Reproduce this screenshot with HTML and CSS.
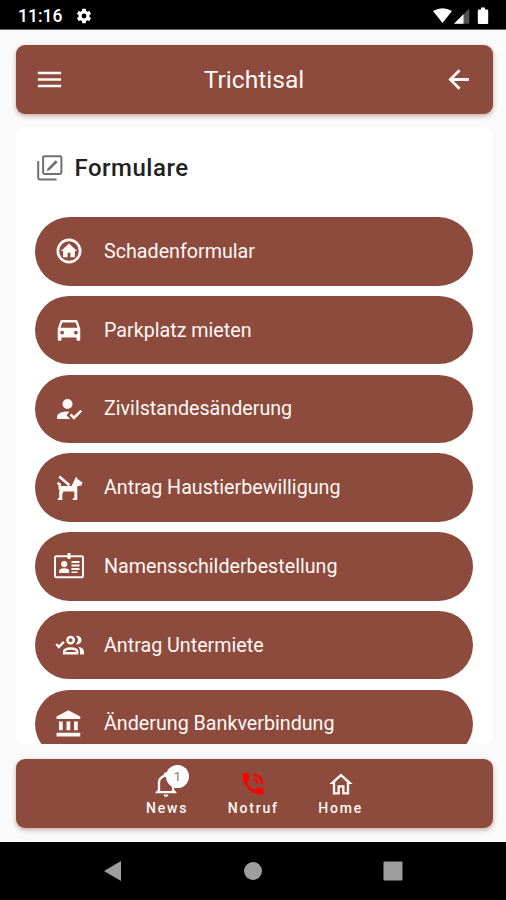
FILE: index.html
```html
<!DOCTYPE html>
<html lang="de">
	<head>
		<meta charset="UTF-8" />
		<meta name="viewport" content="width=device-width, initial-scale=1.0" />
		<title>Trichtisal</title>
		<link rel="stylesheet" href="styles.css">
	</head>

	<body>
		<div class="statusbar">
			<span class="clock">11:16</span>
			<svg class="gear" viewBox="0 0 24 24"><path d="M19.14 12.94c.04-.3.06-.61.06-.94 0-.32-.02-.64-.07-.94l2.03-1.58c.18-.14.23-.41.12-.61l-1.92-3.32c-.12-.22-.37-.29-.59-.22l-2.39.96c-.5-.38-1.03-.7-1.62-.94l-.36-2.54c-.04-.24-.24-.41-.48-.41h-3.84c-.24 0-.43.17-.47.41l-.36 2.54c-.59.24-1.13.57-1.62.94l-2.39-.96c-.22-.08-.47 0-.59.22L2.74 8.87c-.12.21-.08.47.12.61l2.03 1.58c-.05.3-.09.63-.09.94s.02.64.07.94l-2.03 1.58c-.18.14-.23.41-.12.61l1.92 3.32c.12.22.37.29.59.22l2.39-.96c.5.38 1.03.7 1.62.94l.36 2.54c.05.24.24.41.48.41h3.84c.24 0 .44-.17.47-.41l.36-2.54c.59-.24 1.13-.56 1.62-.94l2.39.96c.22.08.47 0 .59-.22l1.92-3.32c.12-.22.07-.47-.12-.61l-2.01-1.58zM12 15.2A3.2 3.2 0 1 1 12 8.8a3.2 3.2 0 0 1 0 6.4z"/></svg>
			<svg class="system" viewBox="0 0 60 20">
				<path d="M2 5.1Q11.5-.8 21 5.1L11.5 17z"/>
				<path d="M38.3 2.5V17.8H23z" opacity=".32"/>
				<path d="M32.5 8.3v9.5H23z"/>
				<path d="M50 1.5h4v2h2q1.2 0 1.2 1.2v12q0 1.2-1.2 1.2h-8q-1.2 0-1.2-1.2v-12q0-1.2 1.2-1.2h2z"/>
			</svg>
		</div>

		<div class="app">
			<header class="header">
				<svg class="icon" viewBox="0 0 24 24"><path d="M3 6h18v2H3zM3 11h18v2H3zM3 16h18v2H3z"/></svg>
				<h1>Trichtisal</h1>
				<svg class="icon" viewBox="0 0 24 24"><path d="M20 10.9v2.2H8.3l5.3 5.3-1.52 1.52L4.16 12l7.92-7.92 1.52 1.52-5.3 5.3z"/></svg>
			</header>

			<main class="card">
				<div class="card-title">
					<svg viewBox="0 0 26 26">
						<path d="M7 1.2h16q1.4 0 1.4 1.4v15q0 1.4-1.4 1.4H7.5q-1.4 0-1.4-1.4V2.6q0-1.4 1.4-1.4zM1.2 6v17q0 1.4 1.4 1.4h17"/>
						<path class="pencil" d="M9.8 16.2l1-3 7.8-7.9 2 2-7.9 7.8z"/>
					</svg>
					<h2>Formulare</h2>
				</div>
				<div class="list">
					<div class="item">
						<svg class="icon" viewBox="0 0 24 24"><path d="M12 2A10 10 0 1 1 12 22 10 10 0 0 1 12 2m0 2.2A7.8 7.8 0 1 0 12 19.8 7.8 7.8 0 0 0 12 4.2m0 1.8 6.5 6h-1.8v4.9h-3.6v-3.5h-2.2v3.5H7.3V12H5.5z"/></svg>
						<span>Schadenformular</span>
					</div>
					<div class="item">
						<svg class="icon" viewBox="0 0 24 24"><path d="M18.92 5.01C18.72 4.42 18.16 4 17.5 4h-11c-.66 0-1.21.42-1.42 1.01L3 11v8.5c0 .55.45 1 1 1h1c.55 0 1-.45 1-1V18h12v1.5c0 .55.45 1 1 1h1c.55 0 1-.45 1-1V11zM6.5 15.5A1.5 1.5 0 1 1 6.5 12.5a1.5 1.5 0 0 1 0 3m11 0A1.5 1.5 0 1 1 17.5 12.5a1.5 1.5 0 0 1 0 3M5.2 10.2l1.5-4.2h10.6l1.5 4.2z"/></svg>
						<span>Parkplatz mieten</span>
					</div>
					<div class="item">
						<svg class="icon" viewBox="0 0 24 24"><path d="m21.1 12.5 1.4 1.41-6.53 6.59L12.5 17l1.4-1.41 2.07 2.08zM10 17l3 3H2.5v-2c0-2.21 3.58-4 8-4l1.89.11zM10.8 4A4 4 0 1 1 10.8 12 4 4 0 0 1 10.8 4"/></svg>
						<span>Zivilstandesänderung</span>
					</div>
					<div class="item">
						<svg class="icon" viewBox="0 0 30 30">
							<path d="M6.5 13h11l3-6 1.7-3.5 1.3 2.5 5 3.5-1.2 3-4 .7V27h-4.5v-2h1.5V18.5H9.5l-1.2 3V27H3.8v-2h1.4v-6.5z"/>
							<path class="line thick" d="M5.2 3.5 15.5 12.3M3.5 9.8 5.8 11.5v5"/>
						</svg>
						<span>Antrag Haustierbewilligung</span>
					</div>
					<div class="item">
						<svg class="icon" viewBox="0 0 30 30">
							<path class="line" d="M2.3 5.3h25.4q1.3 0 1.3 1.3v18.3q0 1.3-1.3 1.3H2.3Q1 26.2 1 24.9V6.6q0-1.3 1.3-1.3z"/>
							<path d="M13.5 2h3v6h-3zM10.2 10a3.1 3.1 0 1 1 0 6.2 3.1 3.1 0 0 1 0-6.2M5.2 22v-2q0-2.7 5-2.7t5 2.7v2zM17.5 10h8v2h-8zM17.5 13.5h8v2h-8zM17.5 17h8v2h-8zM17.5 20.5h6v1.5h-6z"/>
						</svg>
						<span>Namensschilderbestellung</span>
					</div>
					<div class="item">
						<svg class="icon" viewBox="0 0 30 30">
							<path class="line thick" d="M2.2 14l2.7 3 5-5.2M19.8 10.1A3.2 3.2 0 1 1 13.4 10.1 3.2 3.2 0 0 1 19.8 10.1M10.2 23.2v-1.4q0-3.3 6.5-3.3t6.5 3.3v1.4z"/>
							<path d="M21.8 5.7q5.7 0 5.7 4.4T21.8 14.5q2.2-1.8 2.2-4.4T21.8 5.7M24.5 16.8q5.5 1.2 5.5 5v2.6h-4v-2.6q0-3-1.5-5"/>
						</svg>
						<span>Antrag Untermiete</span>
					</div>
					<div class="item">
						<svg class="icon" viewBox="0 0 24 24"><path d="M11.5 1 2 6v2h19V6M16 10v7h3v-7M2 22h19v-3H2M10 10v7h3v-7M4 10v7h3v-7z"/></svg>
						<span>Änderung Bankverbindung</span>
					</div>
				</div>
			</main>

			<nav class="tabs">
				<div class="tab">
					<svg class="icon" viewBox="0 0 24 24"><path d="M10 21h4c0 1.1-.9 2-2 2s-2-.9-2-2m11-2v1H3v-1l2-2v-6c0-3.1 2-5.8 5-6.7V4c0-1.1.9-2 2-2s2 .9 2 2v.3c3 .9 5 3.6 5 6.7v6zm-4-8c0-2.8-2.2-5-5-5s-5 2.2-5 5v7h10z"/></svg>
					<span class="badge">1</span>
					<span>News</span>
				</div>
				<div class="tab">
					<svg class="icon call" viewBox="0 0 24 24"><path d="M20 15.5c-1.2 0-2.5-.2-3.6-.6-.3-.1-.7 0-1 .2l-2.2 2.2c-2.8-1.4-5.1-3.8-6.6-6.6l2.2-2.2c.3-.3.4-.7.2-1-.3-1.1-.5-2.3-.5-3.5 0-.6-.4-1-1-1H4c-.6 0-1 .4-1 1 0 9.4 7.6 17 17 17 .6 0 1-.4 1-1v-3.5c0-.6-.4-1-1-1M19 12h2a9 9 0 0 0-9-9v2a7 7 0 0 1 7 7m-4 0h2c0-2.8-2.2-5-5-5v2a3 3 0 0 1 3 3"/></svg>
					<span>Notruf</span>
				</div>
				<div class="tab">
					<svg class="icon" viewBox="0 0 24 24"><path d="m12 5.7 5 4.5V19h-2v-6H9v6H7v-8.8zM12 3 2 12h3v9h6v-6h2v6h6v-9h3z"/></svg>
					<span>Home</span>
				</div>
			</nav>
		</div>

		<div class="sysnav">
			<svg viewBox="0 0 20 22"><path d="M1 11 18 1v20z"/></svg>
			<svg viewBox="0 0 20 22"><circle cx="10" cy="11" r="9"/></svg>
			<svg viewBox="0 0 20 22"><rect x=".5" y="1.5" width="19" height="19" rx="1"/></svg>
		</div>
	</body>
</html>
```
FILE: styles.css
```css
* {
	box-sizing: border-box;
}

body {
	margin: 0;
	height: 900px;
	display: flex;
	flex-direction: column;
	overflow: hidden;
	font-family: Roboto, sans-serif;
	background: #fafafa;
	color: #fff8f4;
}

h1,
h2 {
	margin: 0;
}

svg {
	display: block;
	flex-shrink: 0;
	fill: currentColor;
}

.statusbar {
	display: flex;
	align-items: center;
	height: 30px;
	padding: 2px 15px 0 18px;
	background: #000;
	border-bottom: 1px solid #666;
	color: #fff;
}

.clock {
	width: 57px;
	font-size: 17.5px;
	font-weight: 500;
}

.gear {
	width: 18px;
	height: 18px;
}

.system {
	width: 60px;
	height: 20px;
	margin-left: auto;
}

.app {
	flex: 1;
	min-height: 0;
	display: flex;
	flex-direction: column;
	padding: 15px 13px 14px 16px;
}

.header,
.tabs {
	flex-shrink: 0;
	height: 69px;
	border-radius: 9px;
	background: #8d4b3d;
	box-shadow: 0 2px 5px rgba(120, 50, 30, 0.4);
}

.header {
	display: flex;
	align-items: center;
	justify-content: space-between;
	padding: 0 19px 0 18px;
}

.header .icon {
	width: 31px;
	height: 31px;
}

.header h1 {
	font-size: 24.6px;
	font-weight: 400;
}

.card {
	flex: 1;
	min-height: 0;
	overflow: hidden;
	margin: 14px 0 15px;
	padding: 0 20px 0 19px;
	border-radius: 9px;
	background: #fff;
	color: #222;
}

.card-title {
	display: flex;
	align-items: center;
	gap: 11.5px;
	height: 89px;
	padding: 0 0 9px 2px;
}

.card-title svg {
	width: 26px;
	height: 26px;
	fill: none;
	stroke: #707070;
	stroke-width: 2;
}

.card-title .pencil {
	fill: #707070;
	stroke: none;
}

.card-title h2 {
	font-size: 24px;
	font-weight: 500;
	letter-spacing: 0.5px;
}

.list {
	display: flex;
	flex-direction: column;
	gap: 10.25px;
	color: #fff8f4;
}

.item {
	flex-shrink: 0;
	display: flex;
	align-items: center;
	gap: 20px;
	height: 68.5px;
	padding-left: 19px;
	border-radius: 35px;
	background: #8d4b3d;
	font-size: 19.7px;
}

.item .icon {
	width: 30px;
	height: 30px;
}

.line {
	fill: none;
	stroke: currentColor;
	stroke-width: 2;
}

.thick {
	stroke-width: 2.5;
}

.tabs {
	display: flex;
	justify-content: center;
	gap: 39.5px;
}

.tab {
	position: relative;
	display: flex;
	flex-direction: column;
	align-items: center;
	padding-top: 10.5px;
	font-size: 14px;
	font-weight: 500;
	letter-spacing: 1.8px;
}

.tab .icon {
	width: 28px;
	height: 28px;
	margin-bottom: 2px;
}

.tab:first-child .icon {
	margin-right: 3px;
}

.call {
	color: #f00;
}

.badge {
	position: absolute;
	top: 6px;
	left: 20px;
	width: 23px;
	height: 23px;
	border-radius: 50%;
	background: #fff;
	color: #8b7772;
	font-size: 13px;
	font-weight: 400;
	letter-spacing: 0;
	line-height: 23px;
	text-align: center;
}

.sysnav {
	display: flex;
	align-items: center;
	justify-content: center;
	gap: 120px;
	height: 58px;
	background: #000;
	color: #9e9e9e;
}

.sysnav svg {
	width: 20px;
	height: 22px;
}
```
